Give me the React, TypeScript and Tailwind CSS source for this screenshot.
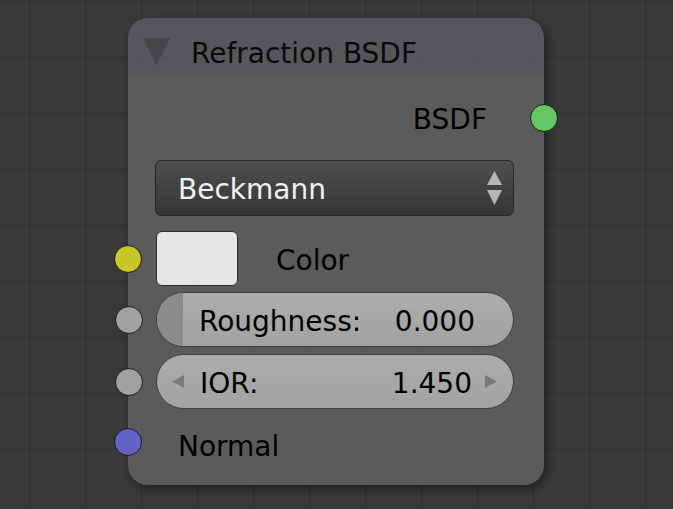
import React from 'react';

const font = { fontFamily: '"DejaVu Sans", "Liberation Sans", sans-serif' };

const Socket = ({ color, side }: { color: string; side: 'left' | 'right' }) => (
  <div
    className={`absolute top-1/2 -translate-y-1/2 w-[28px] h-[28px] rounded-full border border-[#1b1b1b] ${
      side === 'left' ? 'left-[-41px]' : 'right-[-44px]'
    } ${color}`}
  />
);

const Label = ({ children, className = 'text-black pt-[4px]' }: { children: React.ReactNode; className?: string }) => (
  <span className={`text-[28px] leading-none ${className}`}>{children}</span>
);

const App = () => {
  return (
    <div
      className="w-[673px] h-[509px] overflow-hidden bg-[#393939] bg-[linear-gradient(to_right,#2f2f2f_1px,transparent_1px),linear-gradient(to_bottom,#2f2f2f_1px,transparent_1px)] bg-[length:56px_56px] bg-[position:29px_1px] pt-[18px]"
      style={font}
    >
      {/* node */}
      <div className="ml-[128px] w-[416px] h-[467px] flex flex-col rounded-[20px] shadow-[3px_4px_10px_rgba(0,0,0,0.45)]">
        {/* header */}
        <div className="h-[57px] pt-[10px] pl-[15px] flex items-center gap-[21px] rounded-t-[20px] bg-[rgba(98,98,104,0.72)]">
          <svg width="27" height="28" viewBox="0 0 27 28">
            <polygon points="0,0 27,0 13.5,28" fill="#464649" />
          </svg>
          <Label className="text-[#0a0a0a] pt-[4px]">Refraction BSDF</Label>
        </div>

        {/* body */}
        <div className="flex-1 flex flex-col pt-[15px] pl-[27px] pr-[30px] rounded-b-[20px] bg-[rgba(106,106,106,0.7)]">
          {/* output */}
          <div className="relative h-[56px] flex items-center justify-end pr-[27px]">
            <Label>BSDF</Label>
            <Socket color="bg-[#63c763]" side="right" />
          </div>

          {/* distribution dropdown */}
          <div className="mt-[14px] h-[56px] flex items-center justify-between pl-[22px] pr-[11px] rounded-[6px] border border-[#262626] bg-[linear-gradient(to_bottom,#4f4f4f,#353535)]">
            <Label className="text-[#f2f2f2] pt-[4px]">Beckmann</Label>
            <div className="flex flex-col gap-[5px]">
              <svg width="15" height="14" viewBox="0 0 15 14">
                <polygon points="7.5,0 15,14 0,14" fill="#b5b5b5" />
              </svg>
              <svg width="15" height="15" viewBox="0 0 15 15">
                <polygon points="0,0 15,0 7.5,15" fill="#b5b5b5" />
              </svg>
            </div>
          </div>

          {/* color */}
          <div className="relative mt-[15px] h-[55px] flex items-center gap-[38px]">
            <div className="w-[82px] h-[55px] ml-[1px] rounded-[6px] border border-[#2b2b2b] bg-[#e6e6e6]" />
            <Label>Color</Label>
            <Socket color="bg-[#c7c729]" side="left" />
          </div>

          {/* roughness */}
          <div className="relative mt-[6px] h-[55px] ml-[1px]">
            <div className="h-full flex items-center rounded-full border border-[#3e3e3e] overflow-hidden bg-[linear-gradient(to_bottom,#adadad,#a2a2a2)]">
              <div className="w-[26px] h-full bg-[#8b8b8b]" />
              <div className="flex-1 flex items-center justify-between pl-[16px] pr-[38px]">
                <Label>Roughness:</Label>
                <Label>0.000</Label>
              </div>
            </div>
            <Socket color="bg-[#a1a1a1]" side="left" />
          </div>

          {/* ior */}
          <div className="relative mt-[7px] h-[55px] ml-[1px]">
            <div className="h-full flex items-center pl-[15px] pr-[16px] rounded-full border border-[#3e3e3e] bg-[linear-gradient(to_bottom,#adadad,#a2a2a2)]">
              <svg width="12" height="13" viewBox="0 0 12 13">
                <polygon points="12,0 12,13 0,6.5" fill="#7a7a7a" />
              </svg>
              <div className="flex-1 flex items-center justify-between pl-[16px] pr-[13px]">
                <Label>IOR:</Label>
                <Label>1.450</Label>
              </div>
              <svg width="12" height="13" viewBox="0 0 12 13">
                <polygon points="0,0 12,6.5 0,13" fill="#7a7a7a" />
              </svg>
            </div>
            <Socket color="bg-[#a1a1a1]" side="left" />
          </div>

          {/* normal */}
          <div className="relative mt-[5px] h-[56px] flex items-center pl-[23px]">
            <Label className="text-black pt-[10px]">Normal</Label>
            <Socket color="bg-[#6363c7]" side="left" />
          </div>
        </div>
      </div>
    </div>
  );
};

export default App;
